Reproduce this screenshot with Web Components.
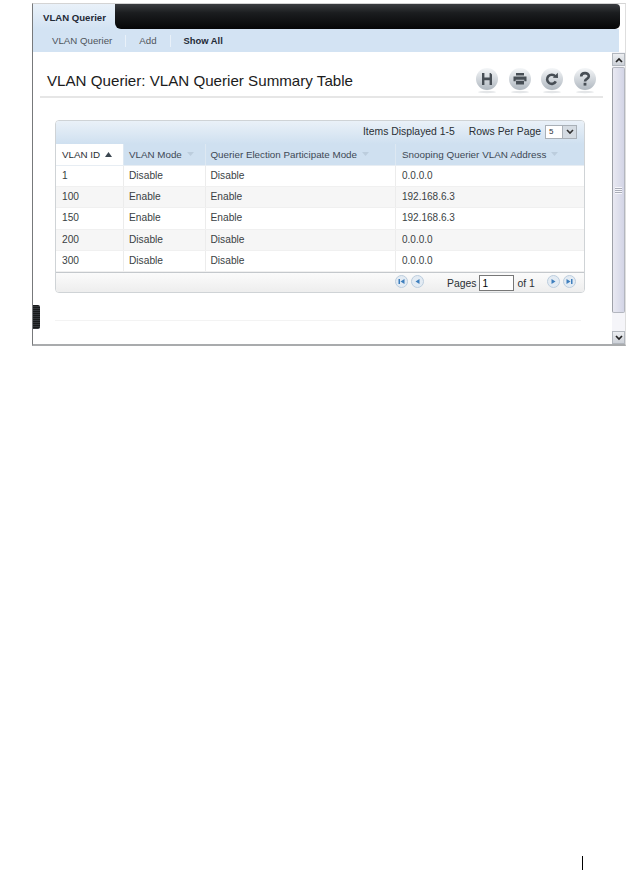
<!DOCTYPE html>
<html>
<head>
<meta charset="utf-8">
<title>VLAN Querier</title>
<style>
  html, body { margin: 0; background: #fff; }
  body { width: 641px; height: 871px; overflow: hidden; font-family: "Liberation Sans", Arial, sans-serif; }
</style>
</head>
<body>
<vq-screen>
  <vq-tabbar label="VLAN Querier"></vq-tabbar>
  <vq-subnav></vq-subnav>
  <vq-page title="VLAN Querier: VLAN Querier Summary Table"></vq-page>
</vq-screen>
<page-tick></page-tick>

<script>
// Small icon set used by the heading buttons
const GLYPHS = {
  save: '<path fill="#474e55" d="M7 6h2.4v4.6h5.2V6h1L17 7.4V18h-2.4v-4.8H9.4V18H7z"/>',
  print: '<path fill="#474e55" d="M8 6h8v2.6H8zM5.5 9.4h13v4.8h-2.2v-1.4H7.7v1.4H5.5zM8 13.8h8v3.6H8z"/>',
  refresh: '<path fill="none" stroke="#474e55" stroke-width="2.6" d="M15.8 14.4a4.6 4.6 0 1 1 -.5-5"/><path fill="#474e55" d="M12.8 10.8l5.2.2-.2-5.2z"/>',
  help: '<path fill="none" stroke="#474e55" stroke-width="2.6" d="M8.2 9.4c0-4.2 7.6-4.4 7.6-.2 0 2.8-3.8 2.6-3.8 5.4"/><rect x="10.6" y="15.8" width="2.8" height="2.8" fill="#474e55"/>'
};

class VqScreen extends HTMLElement {
  constructor() {
    super();
    this.attachShadow({ mode: 'open' });
    this.shadowRoot.innerHTML = `
    <style>
      :host {
        display: block;
        position: relative;
        box-sizing: border-box;
        width: 594px;
        height: 343px;
        margin: 3px 0 0 32px;
        border-top: 1px solid #d4d4d4;
        border-left: 1px solid #77797b;
        border-right: 1px solid #dedede;
        border-bottom: 2px solid #a9abad;
        background: #fff;
      }
      .handle {
        position: absolute;
        left: 0;
        top: 301px;
        width: 7px;
        height: 24px;
        background: repeating-linear-gradient(#17191a 0 1px, #33363a 1px 2px);
        border-radius: 0 2px 2px 0;
      }
    </style>
    <slot></slot>
    <div class="handle"></div>
    `;
  }
}

class VqTabbar extends HTMLElement {
  constructor() {
    super();
    this.attachShadow({ mode: 'open' });
    this.shadowRoot.innerHTML = `
    <style>
      :host {
        display: flex;
        height: 25px;
        margin-right: 5px;
        background: linear-gradient(90deg, #d3e3f3 calc(100% - 6px), #fff 0);
      }
      .tab {
        width: 82px;
        box-sizing: border-box;
        padding: 8px 0 0 10px;
        font-size: 9.6px;
        font-weight: bold;
        color: #1f2a36;
        background: linear-gradient(#e9f1f9, #d3e3f3);
      }
      .bar {
        flex: 1;
        border-radius: 0 4px 5px 6px;
        background: linear-gradient(#3a3d41 0, #1b1d1f 35%, #050607 100%);
      }
    </style>
    <div class="tab">${this.getAttribute('label')}</div>
    <div class="bar"></div>
    `;
  }
}

class VqSubnav extends HTMLElement {
  constructor() {
    super();
    this.attachShadow({ mode: 'open' });
    this.shadowRoot.innerHTML = `
    <style>
      :host {
        display: flex;
        align-items: center;
        height: 23px;
        margin-right: 6px;
        padding-left: 19px;
        font-size: 9.7px;
        color: #50555b;
        background: #d3e3f3;
      }
      span + span { margin-left: 13px; padding-left: 13px; border-left: 1px solid #e9f1f9; line-height: 12px; }
      .on { font-size: 9.4px; font-weight: bold; color: #1f2a36; }
    </style>
    <span>VLAN Querier</span><span>Add</span><span class="on">Show All</span>
    `;
  }
}

class VqIconButton extends HTMLElement {
  constructor() {
    super();
    this.attachShadow({ mode: 'open' });
    this.shadowRoot.innerHTML = `
    <style>
      :host {
        display: block;
        width: 24px;
        height: 28px;
      }
      svg { display: block; }
    </style>
    <svg width="24" height="28" viewBox="0 0 24 28">
      <defs>
        <linearGradient id="g" x1="0" y1="0" x2="0" y2="1">
          <stop offset="0" stop-color="#f4f6f8"/>
          <stop offset="1" stop-color="#b0b8c0"/>
        </linearGradient>
      </defs>
      <ellipse cx="12" cy="25" rx="9" ry="1.2" fill="#e4e6e8"/>
      <circle cx="12" cy="12" r="11" fill="url(#g)"/>
      ${GLYPHS[this.getAttribute('glyph')]}
    </svg>
    `;
  }
}

class VqPage extends HTMLElement {
  constructor() {
    super();
    this.attachShadow({ mode: 'open' });
    this.shadowRoot.innerHTML = `
    <style>
      :host {
        display: flex;
        height: 292px;
      }
      .main { flex: 1; min-width: 0; }
      .head {
        display: flex;
        align-items: flex-start;
        justify-content: space-between;
        box-sizing: border-box;
        height: 46px;
        margin: 0 9px 0 7px;
        padding: 15px 6px 0 7px;
        border-bottom: 2px solid #e6e6e6;
      }
      h1 {
        margin: 5px 0 0;
        font-size: 15.15px;
        font-weight: normal;
        line-height: 18px;
        color: #1c1c1c;
      }
      .tools { display: flex; gap: 8.67px; }
      .body { padding: 22px 0 0 22px; }
      .rule { margin: 27px 31px 0 0; border-top: 1px solid #f3f3f3; }
    </style>
    <div class="main">
      <div class="head">
        <h1>${this.getAttribute('title')}</h1>
        <div class="tools">
          <vq-icon-button glyph="save"></vq-icon-button>
          <vq-icon-button glyph="print"></vq-icon-button>
          <vq-icon-button glyph="refresh"></vq-icon-button>
          <vq-icon-button glyph="help"></vq-icon-button>
        </div>
      </div>
      <div class="body">
        <vq-table></vq-table>
        <div class="rule"></div>
      </div>
    </div>
    <vq-scrollbar></vq-scrollbar>
    `;
  }
}

class VqTable extends HTMLElement {
  constructor() {
    super();
    this.attachShadow({ mode: 'open' });
    const rows = [
      ['1', 'Disable', 'Disable', '0.0.0.0'],
      ['100', 'Enable', 'Enable', '192.168.6.3'],
      ['150', 'Enable', 'Enable', '192.168.6.3'],
      ['200', 'Disable', 'Disable', '0.0.0.0'],
      ['300', 'Disable', 'Disable', '0.0.0.0']
    ];
    const body = rows
      .map((r) => `<div class="row">${r.map((c) => `<div>${c}</div>`).join('')}</div>`)
      .join('');
    const up = '<svg width="7" height="5" viewBox="0 0 7 5"><path d="M3.5 0L7 5H0z" fill="#3b4650"/></svg>';
    const down = '<svg width="7" height="5" viewBox="0 0 7 5"><path d="M0 0h7L3.5 4z" fill="#bccddd"/></svg>';
    const nav = (d) => `<svg width="13" height="13" viewBox="0 0 13 13"><circle cx="6.5" cy="6.5" r="6" fill="#e3ebf3" stroke="#bccddd"/><path d="${d}" fill="#3f7fbd"/></svg>`;
    this.shadowRoot.innerHTML = `
    <style>
      :host {
        display: block;
        box-sizing: border-box;
        width: 530px;
        height: 173px;
        border: 1px solid #cfd3d6;
        border-radius: 4px;
        font-size: 10.2px;
        color: #3a3f44;
        overflow: hidden;
      }
      .top {
        display: flex;
        align-items: center;
        justify-content: flex-end;
        height: 23px;
        padding: 0 7px 2px 0;
        box-sizing: border-box;
        font-size: 10.4px;
        color: #2a2f34;
        background: linear-gradient(#eaf1f8, #cfe0f0);
      }
      .top .gap { width: 14px; }
      .select {
        display: flex;
        box-sizing: border-box;
        width: 32px;
        height: 14px;
        margin-left: 4px;
        border: 1px solid #a9b0b7;
        background: #fff;
        font-size: 8px;
        line-height: 12px;
      }
      .select b { flex: 1; padding-left: 3px; font-weight: normal; }
      .select i { display: flex; align-items: center; justify-content: center; width: 13px; background: #d4dbe2; border-left: 1px solid #aab1b8; }
      .row, .hdr { display: grid; grid-template-columns: 67px 81.5px 190.5px 1fr; }
      .hdr {
        height: 21px;
        background: #cfe0f0;
        border-bottom: 1px solid #e7edf3;
        font-size: 9.8px;
        color: #3d4854;
      }
      .hdr > div {
        display: flex;
        align-items: center;
        gap: 5px;
        padding-left: 5px;
        border-left: 1px solid #dde8f2;
      }
      .hdr > div:first-child { background: #fff; border-left: 0; color: #2a2f34; padding-left: 6px; }
      .hdr > div:last-child { padding-left: 6px; font-size: 9.9px; }
      .row { height: 21.2px; line-height: 20px; box-sizing: border-box; border-bottom: 1px solid #f0f0f0; }
      .row:nth-child(even) { background: #f6f6f6; }
      .row > div { padding-left: 5px; border-left: 1px solid #ececec; }
      .row > div:first-child { padding-left: 6px; border-left: 0; }
      .row > div:last-child { padding-left: 6px; font-size: 10px; }
      .foot {
        display: flex;
        align-items: center;
        height: 21px;
        padding-left: 338.5px;
        font-size: 10.4px;
        border-top: 1px solid #c4c8cc;
        color: #2a2f34;
        background: linear-gradient(#fbfbfb, #ececec);
      }
      .foot svg { margin-bottom: 3px; }
      .foot svg + svg { margin-left: 3px; }
      .pages { margin-left: 23.5px; }
      .foot input {
        box-sizing: border-box;
        width: 35px;
        height: 16px;
        margin: 0 3px 0 3px;
        padding: 0 0 0 2px;
        border: 1px solid #777;
        font: 10px "Liberation Sans", Arial, sans-serif;
        background: #fff;
      }
      .of { margin-right: 12px; }
    </style>
    <div class="top">
      <span>Items Displayed 1-5</span><span class="gap"></span><span>Rows Per Page</span>
      <div class="select"><b>5</b><i><svg width="8" height="6" viewBox="0 0 8 6"><path d="M1 1l3 3 3-3" fill="none" stroke="#333" stroke-width="1.6"/></svg></i></div>
    </div>
    <div class="hdr">
      <div>VLAN ID ${up}</div>
      <div>VLAN Mode ${down}</div>
      <div>Querier Election Participate Mode ${down}</div>
      <div>Snooping Querier VLAN Address ${down}</div>
    </div>
    <div class="rows">${body}</div>
    <div class="foot">
      ${nav('M3.5 4h1.5v5H3.5zM9.5 4v5L5.5 6.5z')}${nav('M8.5 4v5L4.5 6.5z')}
      <span class="pages">Pages</span><input value="1"><span class="of">of 1</span>
      ${nav('M4.5 4v5l4-2.5z')}${nav('M3.5 4v5l4-2.5zM8 4h1.5v5H8z')}
    </div>
    `;
  }
}

class VqScrollbar extends HTMLElement {
  constructor() {
    super();
    this.attachShadow({ mode: 'open' });
    this.shadowRoot.innerHTML = `
    <style>
      :host {
        display: flex;
        flex-direction: column;
        flex: none;
        width: 13px;
        box-sizing: border-box;
        background: #f5f5f9;
      }
      .btn {
        display: flex;
        align-items: center;
        justify-content: center;
        height: 13px;
        margin-top: 1px;
        flex: none;
        background: linear-gradient(#eceef1, #cdd1d8);
        border: 1px solid #b2b7be;
        box-sizing: border-box;
      }
      .thumb {
        height: 246px;
        margin-top: 1px;
        box-sizing: border-box;
        display: flex;
        align-items: center;
        justify-content: center;
        background: linear-gradient(90deg, #e9e9f2, #d3d5e6);
        border: 1px solid #b3b6bf;
        border-left-color: #9ea1a8;
        border-radius: 2px;
      }
      .thumb i { width: 7px; height: 7px; background: repeating-linear-gradient(#f7f7fb 0 1px, #a9acb8 1px 2px); }
      .track { flex: 1; }
    </style>
    <div class="btn"><svg width="8" height="6" viewBox="0 0 8 6"><path d="M1 5l3-3 3 3" fill="none" stroke="#222" stroke-width="1.7"/></svg></div>
    <div class="thumb"><i></i></div>
    <div class="track"></div>
    <div class="btn"><svg width="8" height="6" viewBox="0 0 8 6"><path d="M1 1l3 3 3-3" fill="none" stroke="#222" stroke-width="1.7"/></svg></div>
    `;
  }
}

class PageTick extends HTMLElement {
  constructor() {
    super();
    this.attachShadow({ mode: 'open' });
    this.shadowRoot.innerHTML = `
    <style>
      :host {
        display: block;
        width: 1px;
        height: 14px;
        margin: 510px 0 0 582px;
        background: #000;
      }
    </style>
    `;
  }
}

customElements.define('vq-screen', VqScreen);
customElements.define('vq-tabbar', VqTabbar);
customElements.define('vq-subnav', VqSubnav);
customElements.define('vq-icon-button', VqIconButton);
customElements.define('vq-page', VqPage);
customElements.define('vq-table', VqTable);
customElements.define('vq-scrollbar', VqScrollbar);
customElements.define('page-tick', PageTick);
</script>
</body>
</html>
